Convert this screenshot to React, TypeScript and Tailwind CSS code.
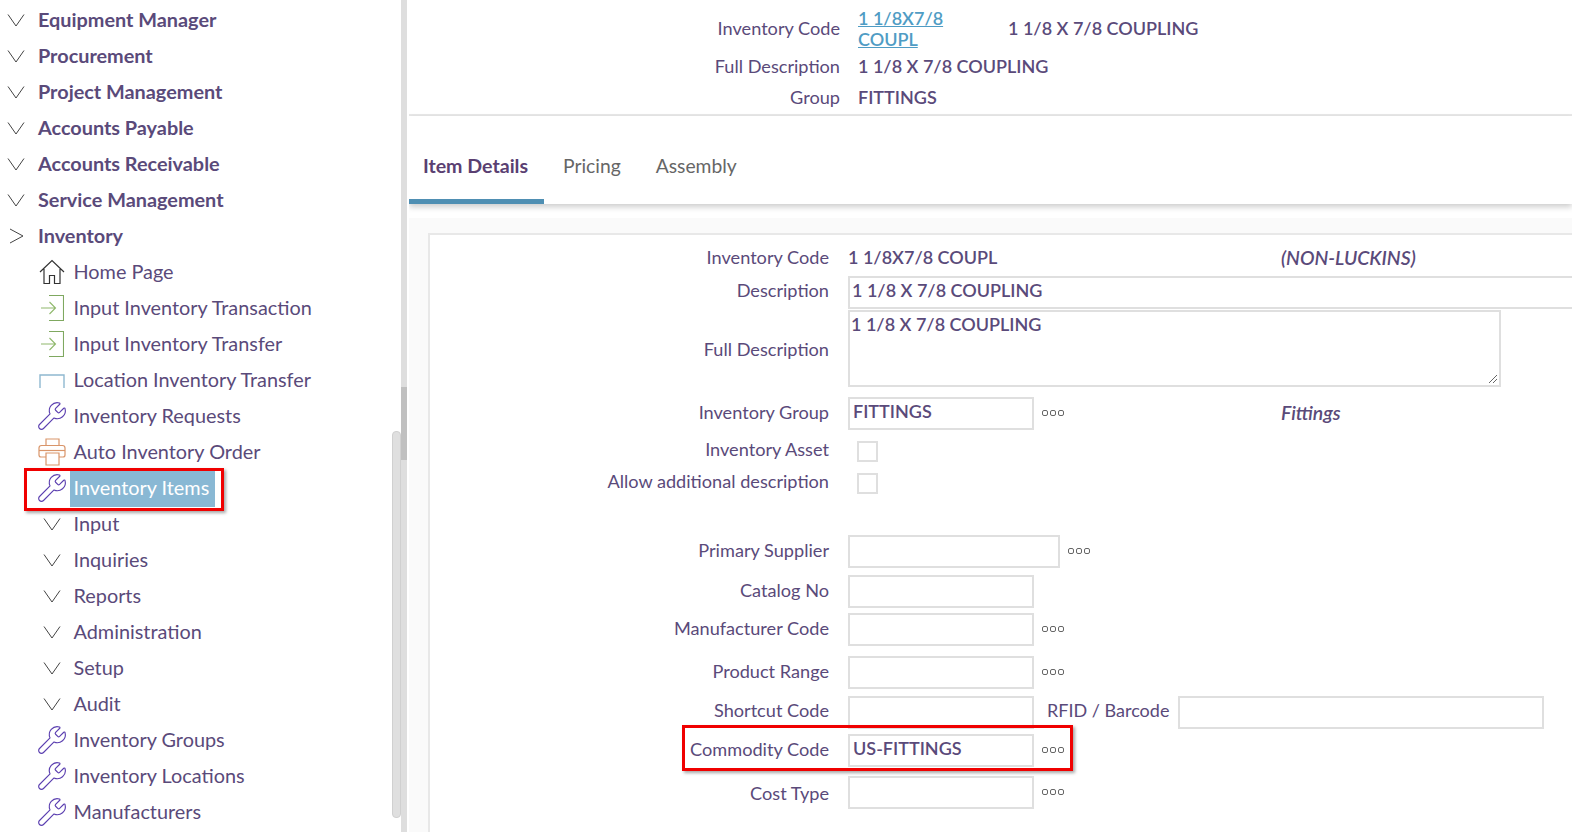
import { Wrench } from 'lucide-react';
import type { ReactNode } from 'react';

const sections = ['Equipment Manager', 'Procurement', 'Project Management', 'Accounts Payable', 'Accounts Receivable', 'Service Management'];

function Chevron({ open }: { open?: boolean }) {
  return (
    <svg width="18" height="18" viewBox="0 0 18 18" fill="none" stroke="#444" strokeWidth="1">
      {open ? <path d="M3 2 L16 9 L3 16" /> : <path d="M1 3.5 L9 15 L17 3.5" />}
    </svg>
  );
}

function HomeIcon() {
  return (
    <svg width="26" height="26" viewBox="0 0 26 26" fill="none" stroke="#333" strokeWidth="1.2">
      <path d="M1 13 L13 1.5 L25 13 M5 10 V24.5 H10.5 V16.5 H15.5 V24.5 H21 V10" />
    </svg>
  );
}

function InputIcon() {
  return (
    <svg width="23" height="26" viewBox="0 0 23 26" fill="none" stroke="#7fa860" strokeWidth="1.1">
      <path d="M8 0.5 H22.5 V25.5 H8" />
      <path d="M0 13 H14.5 M8.5 7 L14.5 13 L8.5 19" stroke="#8fb86c" />
    </svg>
  );
}

function LocationIcon() {
  return (
    <svg width="26" height="14" viewBox="0 0 26 14" fill="none" stroke="#8fb8d0" strokeWidth="1.4" className="mt-[2px]">
      <path d="M1 14 V1 H25 V14" />
    </svg>
  );
}

function PrinterIcon() {
  return (
    <svg width="28" height="28" viewBox="0 0 28 28" fill="none" stroke="#d9956a" strokeWidth="1.2">
      <path d="M8 7.5 V1 H21 V7.5" />
      <path d="M8 19 H3 Q1 19 1 17 V10 Q1 7.5 3.5 7.5 H24.5 Q27 7.5 27 10 V17 Q27 19 25 19 H21" />
      <path d="M1 12.5 H27" />
      <path d="M8 15 H21 V27 H8 Z" />
    </svg>
  );
}

function WrenchIcon() {
  return <Wrench size={32} strokeWidth={0.85} className="text-[#5b3fb0] shrink-0" />;
}

function SubRow({ icon, children }: { icon: ReactNode; children: ReactNode }) {
  return (
    <div className="h-9 flex items-center pl-[37px]">
      <span className="w-[30px] flex items-center justify-center shrink-0">{icon}</span>
      <span className="ml-[6.5px]">{children}</span>
    </div>
  );
}

function Sidebar() {
  return (
    <aside className="w-[409px] shrink-0 h-full flex overflow-hidden">
      <div className="w-[392px] pt-[2px] shrink-0 text-[19.85px]">
        {sections.map((s) => (
          <div key={s} className="h-9 flex items-center pl-[7px]">
            <Chevron />
            <span className="ml-[13px] font-bold">{s}</span>
          </div>
        ))}
        <div className="h-9 flex items-center pl-[7px]">
          <Chevron open />
          <span className="ml-[13px] font-bold">Inventory</span>
        </div>
        <SubRow icon={<HomeIcon />}>Home Page</SubRow>
        <SubRow icon={<InputIcon />}>Input Inventory Transaction</SubRow>
        <SubRow icon={<InputIcon />}>Input Inventory Transfer</SubRow>
        <SubRow icon={<LocationIcon />}>Location Inventory Transfer</SubRow>
        <SubRow icon={<WrenchIcon />}>Inventory Requests</SubRow>
        <SubRow icon={<PrinterIcon />}>Auto Inventory Order</SubRow>
        <div className="relative">
          <SubRow icon={<WrenchIcon />}>
            <span className="block bg-[#89b8d4] text-white -ml-[4px] mt-[1px] pl-[4px] pr-[6px] h-[37px] leading-[35px]">Inventory Items</span>
          </SubRow>
          <div className="absolute left-[24px] top-[-2px] w-[200px] h-[43px] border-[3px] border-[#f00000] shadow-[2px_2px_3px_rgba(0,0,0,0.35)]" />
        </div>
        {['Input', 'Inquiries', 'Reports', 'Administration', 'Setup', 'Audit'].map((s) => (
          <SubRow key={s} icon={<Chevron />}>{s}</SubRow>
        ))}
        <SubRow icon={<WrenchIcon />}>Inventory Groups</SubRow>
        <SubRow icon={<WrenchIcon />}>Inventory Locations</SubRow>
        <SubRow icon={<WrenchIcon />}>Manufacturers</SubRow>
      </div>
      <div className="w-[9px] h-full flex flex-col pt-[431px]">
        <div className="w-[9px] h-[387px] rounded-[4px] bg-[#dfdfdf] border border-[#d0d0d0]" />
      </div>
      <div className="w-[6px] h-full bg-[#dedede] flex flex-col pt-[387px]">
        <div className="h-[73px] bg-[#c0c0c0]" />
      </div>
    </aside>
  );
}

function HeaderRow({ label, className, children }: { label: string; className: string; children: ReactNode }) {
  return (
    <div className={`flex items-center ${className}`}>
      <div className="w-[431px] text-right shrink-0 text-[18.15px]">{label}</div>
      <div className="ml-[18px] flex items-center font-semibold">{children}</div>
    </div>
  );
}

function Box({ w, h = 'h-[33px]', children }: { w: string; h?: string; children?: ReactNode }) {
  return (
    <div className={`${w} ${h} shrink-0 border-2 border-[#dfdfdf] bg-white pl-[2px] leading-[25px] font-semibold`}>{children}</div>
  );
}

function Dots() {
  return (
    <span className="ml-[8px] mb-[2px] flex gap-[2px]">
      <i className="block w-[6px] h-[6px] rounded-[2px] border border-[#666]" />
      <i className="block w-[6px] h-[6px] rounded-[2px] border border-[#666]" />
      <i className="block w-[6px] h-[6px] rounded-[2px] border border-[#666]" />
    </span>
  );
}

function FormRow({ label, className, labelClass = 'pb-[2px]', children }: { label: string; className: string; labelClass?: string; children?: ReactNode }) {
  return (
    <div className={`flex items-center ${className}`}>
      <div className={`w-[399px] shrink-0 text-right text-[18.15px] ${labelClass}`}>{label}</div>
      <div className="ml-[19px] flex items-center min-w-0">{children}</div>
    </div>
  );
}

function Check() {
  return <div className="ml-[9px] w-[21px] h-[21px] border-2 border-[#dfdfdf] bg-white" />;
}

function Main() {
  return (
    <main className="flex-1 min-w-0 h-full overflow-hidden text-[18px]">
      <div className="h-[114px] pt-[8px]">
        <HeaderRow label="Inventory Code" className="h-[42px]">
          <a className="w-[130px] mr-[20px] leading-[21px] underline text-[#4f9cc4]">1 1/8X7/8 COUPL</a>
          <span className="pb-[2px]">1 1/8 X 7/8 COUPLING</span>
        </HeaderRow>
        <HeaderRow label="Full Description" className="h-[31px] pt-[2px]">1 1/8 X 7/8 COUPLING</HeaderRow>
        <HeaderRow label="Group" className="h-[31px] pt-[2px]">FITTINGS</HeaderRow>
      </div>
      <div className="h-[2px] bg-[#e8e8e8]" />
      <div className="relative h-[88px] flex bg-white shadow-[0_3px_6px_rgba(0,0,0,0.2)] text-[#666] text-[19.3px]">
        <div className="w-[135px] h-full flex items-center justify-center font-bold text-[19.6px] text-[#5a3f72] border-b-[5px] border-[#4f8fb3] pt-[17px] pr-[2px]">Item Details</div>
        <div className="ml-[19px] h-full flex items-center pt-[12px]">Pricing</div>
        <div className="ml-[35px] h-full flex items-center pt-[12px]">Assembly</div>
      </div>
      <div className="mt-[14px] h-[620px] bg-[#fafafa] pt-[15px] pl-[19px]">
        <div className="h-full bg-white border-2 border-[#e8e8e8] border-r-0 pt-[6px]">
          <FormRow label="Inventory Code" className="h-[35px]">
            <span className="font-semibold w-[433px] pb-[2px]">1 1/8X7/8 COUPL</span>
            <span className="italic font-semibold text-[19.4px] pb-[2px]">(NON-LUCKINS)</span>
          </FormRow>
          <FormRow label="Description" labelClass="pb-[4px]" className="h-[33px]"><Box w="w-[760px]">1 1/8 X 7/8 COUPLING</Box></FormRow>
          <FormRow label="Full Description" labelClass="pt-[2px]" className="h-[77px] mt-[1px]">
            <div className="relative">
              <Box w="w-[653px]" h="h-[77px]"><span className="-ml-[1px]">1 1/8 X 7/8 COUPLING</span></Box>
              <svg width="10" height="10" viewBox="0 0 10 10" stroke="#666" strokeWidth="1" className="absolute right-[3px] bottom-[3px]">
                <path d="M1 9 L9 1 M5 9 L9 5" />
              </svg>
            </div>
          </FormRow>
          <FormRow label="Inventory Group" className="h-[33px] mt-[10px]">
            <Box w="w-[186px]"><span className="ml-[1px]">FITTINGS</span></Box>
            <Dots />
            <span className="ml-[217px] italic font-semibold text-[19.4px] pb-[2px]">Fittings</span>
          </FormRow>
          <FormRow label="Inventory Asset" labelClass="pb-[4px]" className="h-[21px] mt-[11px]"><Check /></FormRow>
          <FormRow label="Allow additional description" labelClass="pb-[4px]" className="h-[21px] mt-[11px]"><Check /></FormRow>
          <FormRow label="Primary Supplier" className="h-[33px] mt-[41px]"><Box w="w-[212px]" /><Dots /></FormRow>
          <FormRow label="Catalog No" className="h-[33px] mt-[7px]"><Box w="w-[186px]" /></FormRow>
          <FormRow label="Manufacturer Code" className="h-[33px] mt-[5px]"><Box w="w-[186px]" /><Dots /></FormRow>
          <FormRow label="Product Range" className="h-[33px] mt-[10px]"><Box w="w-[186px]" /><Dots /></FormRow>
          <FormRow label="Shortcut Code" labelClass="pb-[4px]" className="h-[33px] mt-[7px]">
            <Box w="w-[186px]" />
            <span className="ml-[13px] mr-[9px] whitespace-nowrap pb-[4px]">RFID / Barcode</span>
            <Box w="w-[366px]" />
          </FormRow>
          <div className="relative mt-[5px]">
            <FormRow label="Commodity Code" className="h-[33px]"><Box w="w-[186px]"><span className="ml-[1px]">US-FITTINGS</span></Box><Dots /></FormRow>
            <div className="absolute left-[252px] top-[-9px] w-[391px] h-[46px] border-[3px] border-[#f00000] shadow-[2px_2px_3px_rgba(0,0,0,0.35)]" />
          </div>
          <FormRow label="Cost Type" labelClass="pt-[2px]" className="h-[33px] mt-[9px]"><Box w="w-[186px]" /><Dots /></FormRow>
        </div>
      </div>
    </main>
  );
}

export default function App() {
  return (
    <div className="w-[1572px] h-[832px] flex overflow-hidden bg-white text-[#5a4a7a] font-['Lato',sans-serif] text-[20px]">
      <Sidebar />
      <Main />
    </div>
  );
}
